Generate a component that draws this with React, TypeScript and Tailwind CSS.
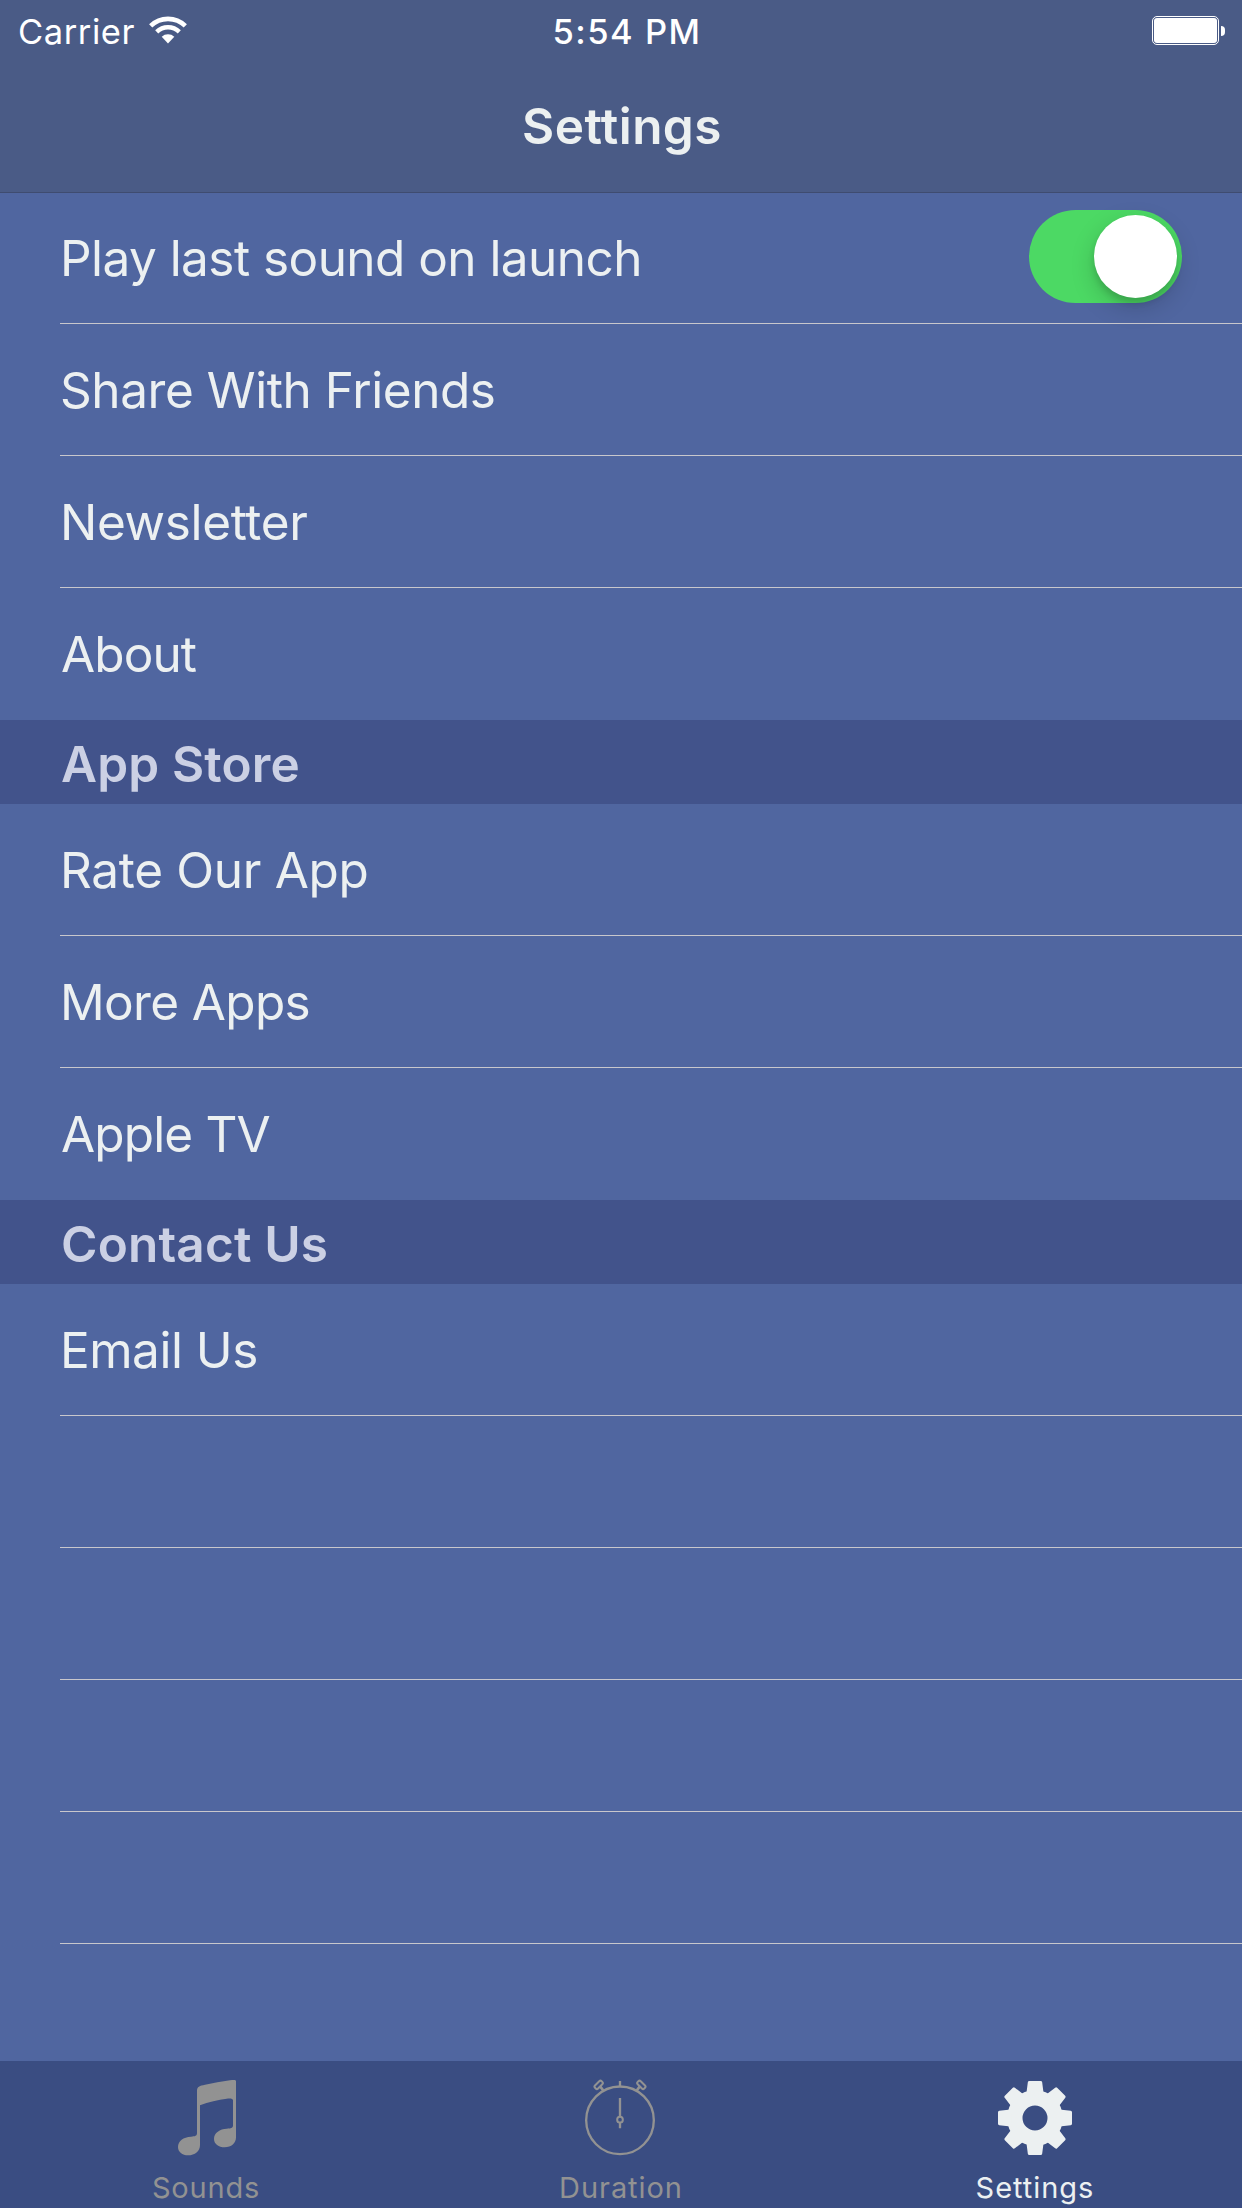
import type { ReactNode } from "react";

function WifiIcon() {
  return (
    <svg className="h-[28px] w-[38px]" viewBox="-19 -27.5 38 28" fill="none" stroke="#fff">
      <path d="M-17.3 -17.6A24.7 24.7 0 0 1 17.3 -17.6" strokeWidth="4.6" />
      <path d="M-11.3 -11.6A16.2 16.2 0 0 1 11.3 -11.6" strokeWidth="4.4" />
      <path d="M0 0L-6.3 -6.8A9.3 9.3 0 0 1 6.3 -6.8Z" fill="#fff" stroke="none" />
    </svg>
  );
}

function Battery() {
  return (
    <div className="flex items-center gap-[2px]">
      <div className="h-[29px] w-[67px] rounded-[5px] border border-white p-px">
        <div className="h-full w-full rounded-[3px] bg-white" />
      </div>
      <div className="h-[10px] w-[4px] rounded-r-full bg-white" />
    </div>
  );
}

function NoteIcon() {
  return (
    <svg className="h-[77px] w-[60px]" viewBox="141 57 180 231" fill="currentColor">
      <path d="M201 92C201 80 209 77 225 74Q262 66 300 61C312 59 318 59 318 64V232C318 250 304 262 284 262C266 262 252 252 252 237C252 218 270 207 290 206C303 206 309 205 309 196V121C309 115 300 115 290 116C265 119 235 126 210 136V255C210 273 195 286 174 286C157 286 144 276 144 261C144 243 160 231 183 230C195 229 201 228 201 219Z" />
    </svg>
  );
}

function StopwatchIcon() {
  return (
    <svg className="h-[77px] w-[74px]" viewBox="162 87 222 231" fill="none" stroke="currentColor" strokeWidth="7">
      <circle cx="270" cy="211" r="101.5" />
      <path d="M270 93V110M270 144V200M270 218V235" />
      <circle cx="270" cy="209" r="8.5" strokeWidth="6" />
      <rect x="192" y="98" width="28" height="13" rx="5" strokeWidth="6" transform="rotate(-45 206 104.5)" />
      <rect x="320" y="98" width="28" height="13" rx="5" strokeWidth="6" transform="rotate(45 334 104.5)" />
      <path d="M211 110L221 123M329 110L319 123" strokeWidth="8" />
    </svg>
  );
}

const toothAngles = [0, 45, 90, 135, 180, 225, 270, 315];

function GearIcon() {
  return (
    <svg className="h-[77px] w-[74px]" viewBox="-111 -117 222 231" fill="currentColor">
      <circle r="60.5" fill="none" stroke="currentColor" strokeWidth="46" />
      {toothAngles.map((a) => (
        <path key={a} d="M-26 -70L-25 -80L-21.5 -107Q-21 -111 -17 -111H17Q21 -111 21.5 -107L25 -80L26 -70Z" transform={`rotate(${a})`} />
      ))}
    </svg>
  );
}

function Toggle() {
  return (
    <div className="mt-[18px] mr-[60px] flex h-[93px] w-[153px] justify-end rounded-full bg-[#4cd964] p-[5px]">
      <div className="h-[83px] w-[83px] rounded-full bg-white shadow-[0_9px_24px_rgba(0,0,0,0.18),0_5px_6px_rgba(0,0,0,0.12)]" />
    </div>
  );
}

function Row({ label, spacing = "", last = false, children }: { label?: string; spacing?: string; last?: boolean; children?: ReactNode }) {
  return (
    <div className="h-[132px] pl-[60px]">
      <div className={`flex h-full items-start justify-between ${last ? "" : "border-b border-[#c8c7cc]"}`}>
        <span className={`-mb-px text-[49.5px] leading-[132px] whitespace-nowrap ${spacing}`}>{label}</span>
        {children}
      </div>
    </div>
  );
}

function SectionHeader({ children }: { children: ReactNode }) {
  return (
    <h2 className="h-[84px] bg-[#42538b] pt-[14px] pl-[61px] text-[49.5px] leading-[60px] font-semibold tracking-[0.18px] text-[#cbd0e4]">
      {children}
    </h2>
  );
}

function Tab({ icon, label, className }: { icon: ReactNode; label: string; className: string }) {
  return (
    <div className={`flex flex-1 flex-col items-center gap-[14px] pt-[18px] text-[29px] leading-[35px] ${className}`}>
      {icon}
      <span>{label}</span>
    </div>
  );
}

export default function App() {
  return (
    <div className="flex h-[2208px] w-[1242px] flex-col overflow-hidden bg-[#5066a0] font-['Inter',sans-serif] text-[#ecf0f1]">
      <header className="relative h-[192px] shrink-0 bg-[#4a5b86] shadow-[0_1px_0_#3f4c70]">
        <div className="grid h-[61px] grid-cols-3 pt-[11px] text-[34.5px] leading-[41px] text-white">
          <div className="flex items-start gap-[14px] pl-[18px]">
            <span className="tracking-[0.57px]">Carrier</span>
            <div className="pt-[4.500px]">
              <WifiIcon />
            </div>
          </div>
          <span className="pl-[12px] text-center font-medium tracking-[1.500px]">5:54 PM</span>
          <div className="flex items-start justify-end pt-[5px] pr-[17px]">
            <Battery />
          </div>
        </div>
        <h1 className="pt-[35px] pl-[2px] text-center text-[49.5px] leading-[60px] font-semibold tracking-[0.45px]">Settings</h1>
      </header>

      <main className="min-h-0 flex-1 overflow-hidden">
        <Row label="Play last sound on launch" spacing="tracking-[-0.55px]">
          <Toggle />
        </Row>
        <Row label="Share With Friends" spacing="tracking-[-0.43px]" />
        <Row label="Newsletter" spacing="tracking-[-0.35px]" />
        <Row label="About" spacing="pl-px tracking-[-0.9px]" last />
        <SectionHeader>App Store</SectionHeader>
        <Row label="Rate Our App" spacing="tracking-[-0.32px]" />
        <Row label="More Apps" spacing="tracking-[-0.65px]" />
        <Row label="Apple TV" spacing="pl-px tracking-[-0.85px]" last />
        <SectionHeader>Contact Us</SectionHeader>
        <Row label="Email Us" spacing="tracking-[-0.5px]" />
        <Row />
        <Row />
        <Row />
        <Row />
      </main>

      <nav className="flex h-[147px] shrink-0 bg-[#3a4d82]">
        <Tab icon={<NoteIcon />} label="Sounds" className="tracking-[0.8px] text-[#929292] [&>span]:pr-[2px]" />
        <Tab icon={<StopwatchIcon />} label="Duration" className="tracking-[0.94px] text-[#929292]" />
        <Tab icon={<GearIcon />} label="Settings" className="tracking-[0.97px]" />
      </nav>
    </div>
  );
}
